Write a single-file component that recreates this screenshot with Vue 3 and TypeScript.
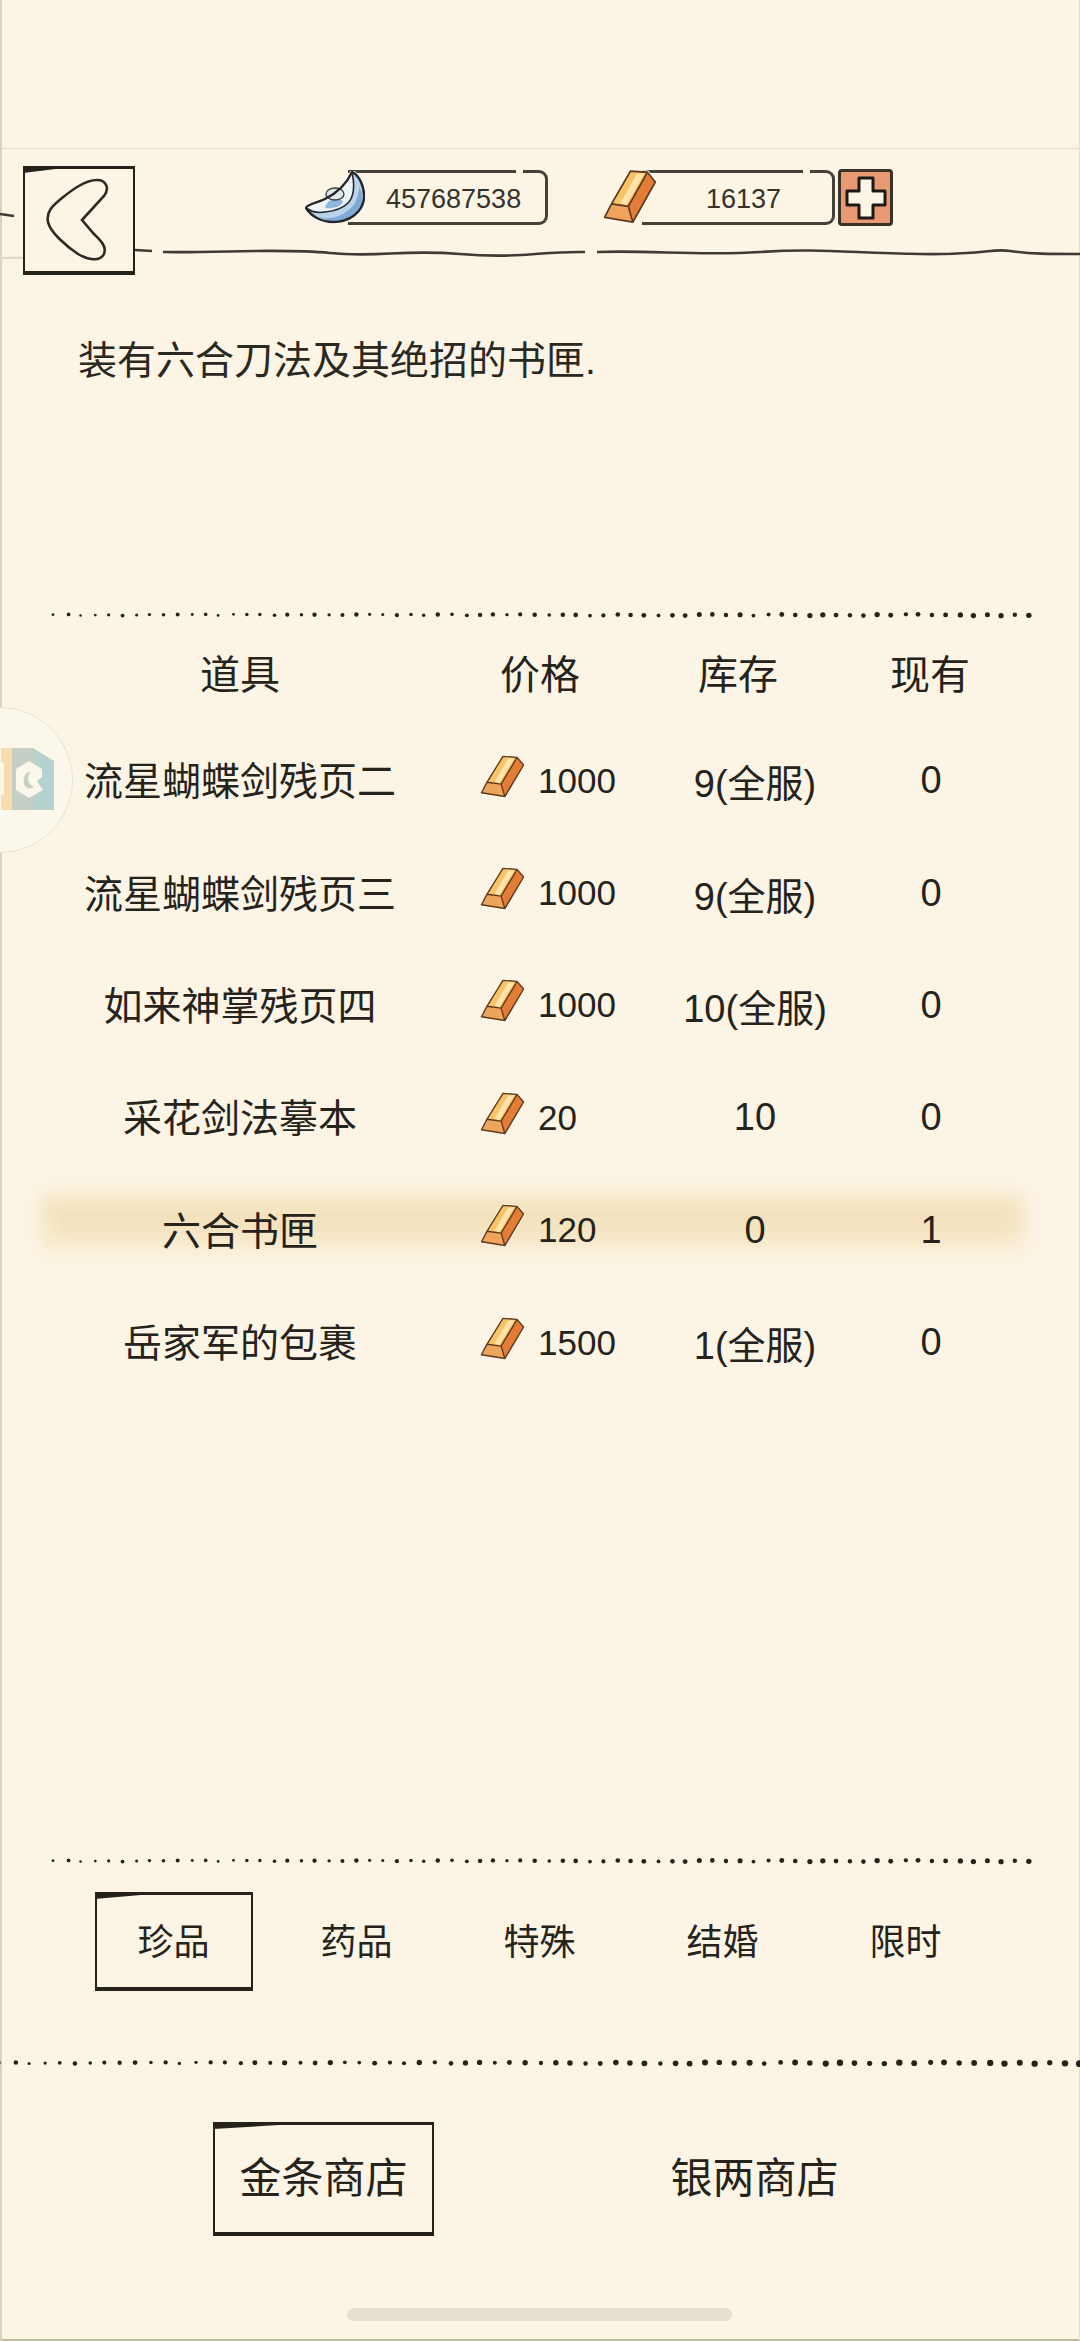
<script setup lang="ts">
interface ShopItem {
  name: string
  price: number
  stock: string
  owned: number
}

const items: ShopItem[] = [
  { name: '流星蝴蝶剑残页二', price: 1000, stock: '9(全服)', owned: 0 },
  { name: '流星蝴蝶剑残页三', price: 1000, stock: '9(全服)', owned: 0 },
  { name: '如来神掌残页四', price: 1000, stock: '10(全服)', owned: 0 },
  { name: '采花剑法摹本', price: 20, stock: '10', owned: 0 },
  { name: '六合书匣', price: 120, stock: '0', owned: 1 },
  { name: '岳家军的包裹', price: 1500, stock: '1(全服)', owned: 0 },
]

const tabs = ['珍品', '药品', '特殊', '结婚', '限时']
const selectedName = '六合书匣'

function noise(i: number) {
  const v = Math.sin(i * 12.9898) * 43758.5453
  return v - Math.floor(v)
}

// hand-drawn dotted rule, the dots get fatter to the right
function dots(width: number, pitch: number, scale: number) {
  const count = Math.round(width / pitch)
  const list = []
  for (let i = 0; i <= count; i++) {
    const t = i / count
    list.push({
      x: i * pitch + (noise(i) - 0.5) * 2,
      y: 6 + (noise(i + 50) - 0.5) * 1.4,
      r: (1.2 + t * 1 + noise(i + 100) * 0.7) * scale,
    })
  }
  return list
}

const innerDots = dots(975, 13.73, 1)
const fullDots = dots(1080, 15, 1.2)
</script>

<template>
  <div class="page">
    <svg class="defs" width="0" height="0">
      <symbol id="gold" viewBox="-1.5 -1.5 48 46" preserveAspectRatio="none">
        <path d="M6 28 23 1 38 2 45 10 25 43 0 39Z" fill="#fffaf0" stroke="#fffaf0" stroke-width="3" />
        <path d="M6 28 23 1 38 2 21 30Z" fill="#f9c468" />
        <path d="M14 27 29 3 35 3 19 29Z" fill="#fde3ae" />
        <path d="M38 2 45 10 25 43 21 30Z" fill="#e27c36" />
        <path d="M6 28 21 30 25 43 0 39Z" fill="#eea45a" />
        <path d="M6 28 23 1 38 2 45 10 25 43 0 39ZM6 28 21 30 38 2M21 30 25 43" fill="none" stroke="#5f3a1c" stroke-width="1.5" stroke-linejoin="round" />
      </symbol>
    </svg>

    <div class="status"></div>

    <header class="topbar">
      <svg class="sketch-line" width="1080" height="110" viewBox="0 149 1080 110">
        <path d="M0 214 14 216" />
        <path d="M135 250 152 251M163 252C220 253 280 248 330 253S400 249 460 254 540 251 585 252M597 252C650 250 700 256 760 252S850 253 920 254 990 248 1010 251 1050 254 1080 254" />
        <path class="faint" d="M0 258H23" />
      </svg>
      <button class="back sketch">
        <svg width="106" height="100" viewBox="26 170 106 100">
          <path d="M82 220 104 196C110 188 106 180 97 180 85 180 72 190 62 198 52 206 46 212 48 222 50 232 66 246 78 254 88 260 100 262 104 254 107 246 100 240 94 234Z" />
        </svg>
      </button>
      <div class="money silver-money">
        <svg class="coin silver" width="60" height="53" viewBox="0 0 60 53">
          <path d="M47 1C54 4 60 16 59 28 57 42 44 51 28 51 16 51 6 45 1 37 2 33 12 32 20 28 32 22 42 12 47 1Z" fill="#eef3f5" stroke="#fffaf0" stroke-width="4" />
          <path d="M1 37C8 42 14 42 20 41 30 40 38 37 43 32 49 26 50 14 47 2 54 6 60 16 59 28 57 42 44 51 28 51 16 51 6 45 1 37Z" fill="#b9d3ea" />
          <path d="M14 46C26 50 42 44 50 32 53 26 54 20 54 16 60 26 58 38 50 44 40 52 24 52 14 46Z" fill="#7fa9d6" />
          <path d="M20 37C22 31 24 29 28 29 33 28 38 28 38 31 35 36 28 38 20 37Z" fill="#8db7de" />
          <ellipse cx="30" cy="23" rx="9" ry="6" fill="#dfe9ee" stroke="#3a3f45" stroke-width="1.4" />
          <path d="M47 1C54 4 60 16 59 28 57 42 44 51 28 51 16 51 6 45 1 37 2 33 12 32 20 28 32 22 42 12 47 1Z" fill="none" stroke="#24262a" stroke-width="2.4" stroke-linejoin="round" />
          <path d="M1 37C8 42 14 42 20 41 30 40 38 37 43 32 49 26 50 14 47 2" fill="none" stroke="#24262a" stroke-width="1.6" />
        </svg>
        <span class="pill silver-pill">457687538</span>
      </div>
      <div class="money gold-money">
        <svg class="coin" width="54" height="56"><use href="#gold" /></svg>
        <span class="pill gold-pill">16137</span>
      </div>
      <button class="plus">
        <svg width="44" height="46" viewBox="0 0 44 46">
          <path d="M15 3H29V16H41V30H29V43H15V30H3V16H15Z" />
        </svg>
      </button>
    </header>

    <p class="desc">装有六合刀法及其绝招的书匣.</p>

    <svg class="dots inner" width="980" height="12">
      <circle v-for="(d, i) in innerDots" :key="i" :cx="d.x" :cy="d.y" :r="d.r" />
    </svg>

    <section class="table">
      <div class="thead">
        <span>道具</span>
        <span>价格</span>
        <span>库存</span>
        <span>现有</span>
      </div>
      <div
        v-for="item in items"
        :key="item.name"
        class="row"
        :class="{ selected: item.name === selectedName }"
      >
        <span class="name">{{ item.name }}</span>
        <span class="price">
          <svg width="45" height="44"><use href="#gold" /></svg>
          <span class="amount">{{ item.price }}</span>
        </span>
        <span class="num">{{ item.stock }}</span>
        <span class="num">{{ item.owned }}</span>
      </div>
    </section>

    <svg class="dots inner" width="980" height="12">
      <circle v-for="(d, i) in innerDots" :key="i" :cx="d.x" :cy="d.y" :r="d.r" />
    </svg>

    <nav class="tabs">
      <div v-for="(tab, i) in tabs" :key="tab" class="tab">
        <span :class="{ sketch: i === 0 }">{{ tab }}</span>
      </div>
    </nav>

    <svg class="dots full" width="1080" height="12">
      <circle v-for="(d, i) in fullDots" :key="i" :cx="d.x" :cy="d.y" :r="d.r" />
    </svg>

    <nav class="shops">
      <span class="shop sketch">金条商店</span>
      <span class="shop">银两商店</span>
    </nav>

    <div class="home-bar"></div>

    <div class="float-btn">
      <svg width="53" height="63" viewBox="0 0 53 63">
        <path d="M0 0H11V62H0Z" fill="#f9dcae" />
        <path d="M0 15H3V47H0Z" fill="#fbf7ea" />
        <path d="M11 0H32V62H11Z" fill="#c5cfc5" />
        <path d="M32 0 53 13V62H32Z" fill="#b5d2cf" />
        <path d="M28 13 41 21V29L36 33 42 42 28 50 15 42V21Z" fill="#fbf7ea" />
        <path d="M29 24C23 25 22 31 23 36 25 41 30 41 33 39 29 37 27 34 27 31 27 28 28 26 29 24Z" fill="#c5cfc5" />
      </svg>
    </div>
  </div>
</template>

<style scoped>
.page {
  position: relative;
  width: 1080px;
  height: 2341px;
  overflow: hidden;
  background: #fcf5e5;
  box-shadow: inset 2px 0 #dcd2b9, inset -1px 0 #e6dfcd, inset 0 -2px #bdbd9f;
  color: #26221c;
  font-family: "Liberation Sans", "Noto Sans CJK SC", sans-serif;
}
.defs {
  position: absolute;
}
.status {
  height: 148px;
  border-bottom: 1px solid #e2dbc9;
}
.topbar {
  position: relative;
  display: flex;
  align-items: flex-start;
  height: 187px;
  padding-left: 23px;
}
.sketch-line {
  position: absolute;
  left: 0;
  top: 0;
  fill: none;
  stroke: #3d3b33;
  stroke-width: 2.6;
}
.sketch-line .faint {
  stroke: #e0d9c6;
}
.sketch {
  position: relative;
  box-sizing: border-box;
  border: solid #25221c;
  border-width: 3px 2px 4px;
}
.sketch::before {
  content: "";
  position: absolute;
  left: -2px;
  top: -3px;
  width: 32%;
  height: 7px;
  background: #25221c;
  clip-path: polygon(0 0, 100% 0, 100% 40%, 0 100%);
}
.back {
  position: relative;
  width: 112px;
  height: 109px;
  margin-top: 17px;
  padding: 0;
  background: #fcf5e5;
  display: flex;
  align-items: center;
  justify-content: center;
}
.back path {
  fill: none;
  stroke: #2c2a24;
  stroke-width: 2.6;
}
.money {
  position: relative;
  display: flex;
  align-items: flex-start;
}
.silver-money {
  margin-left: 170px;
  margin-top: 22px;
}
.gold-money {
  margin-left: 55px;
  margin-top: 19px;
}
.coin {
  position: relative;
  z-index: 1;
  flex: none;
}
.pill {
  position: relative;
  box-sizing: border-box;
  height: 55px;
  line-height: 52px;
  border: 3px solid #45423a;
  border-left: none;
  border-radius: 0 9px 9px 0;
  font-size: 27px;
  color: #35322b;
}
.pill::after {
  content: "";
  position: absolute;
  right: 22px;
  top: -3px;
  width: 7px;
  height: 3px;
  background: #fcf5e5;
}
.silver-pill {
  width: 200px;
  margin-left: -17px;
  margin-top: -1px;
  padding-left: 38px;
}
.gold-pill {
  width: 193px;
  margin-left: -15px;
  margin-top: 2px;
  padding-left: 64px;
}
.plus {
  box-sizing: border-box;
  width: 55px;
  height: 57px;
  margin: 20px 0 0 3px;
  padding: 0;
  display: flex;
  align-items: center;
  justify-content: center;
  background: #e89872;
  border: 3px solid #3a3127;
  border-radius: 4px;
}
.plus path {
  fill: #fcf5e5;
  stroke: #1d1a15;
  stroke-width: 3;
  stroke-linejoin: round;
}
.desc {
  box-sizing: border-box;
  height: 273px;
  margin: 0;
  padding-top: 1px;
  padding-left: 78px;
  font-size: 39px;
  line-height: 48px;
  color: #2b2822;
}
.dots {
  display: block;
  overflow: visible;
  fill: #26231d;
}
.inner {
  margin-left: 54px;
}
.table {
  height: 1234px;
}
.thead {
  display: grid;
  grid-template-columns: 480px 120px 276px 108px;
  height: 92px;
  padding-top: 5px;
  padding-bottom: 3px;
  align-items: center;
  text-align: center;
  font-size: 40px;
}
.row {
  position: relative;
  display: grid;
  grid-template-columns: 480px 170px 210px 142px;
  height: 112.4px;
  align-items: center;
  text-align: center;
  font-size: 38px;
}
.row > * {
  position: relative;
}
.row.selected::before {
  content: "";
  position: absolute;
  left: 42px;
  right: 56px;
  top: 24px;
  height: 56px;
  background: linear-gradient(#f4e2bd 60%, #f8ecd2);
  filter: blur(10px);
}
.name {
  font-size: 39px;
  padding-top: 2px;
}
.price {
  display: flex;
  align-items: center;
  gap: 13px;
  font-size: 35px;
}
.price svg {
  flex: none;
  margin-top: -3px;
}
.amount {
  padding-top: 7px;
}
.num {
  padding-top: 7px;
}
.tabs {
  display: flex;
  height: 190px;
  box-sizing: border-box;
  padding: 25px 0 0 82px;
}
.tab {
  width: 183px;
  display: flex;
  justify-content: center;
}
.tab span {
  box-sizing: border-box;
  width: 158px;
  height: 99px;
  line-height: 96px;
  text-align: center;
  font-size: 36px;
}
.tab span:not(.sketch) {
  padding-top: 3px;
}
.shops {
  display: flex;
  gap: 210px;
  padding: 53px 0 0 213px;
}
.shop {
  box-sizing: border-box;
  width: 221px;
  height: 114px;
  line-height: 108px;
  text-align: center;
  font-size: 42px;
}
.shop:not(.sketch) {
  padding-top: 3px;
}
.home-bar {
  width: 385px;
  height: 13px;
  margin: 72px 0 0 347px;
  border-radius: 7px;
  background: #e6e0d3;
}
.float-btn {
  position: absolute;
  left: -73px;
  top: 707px;
  box-sizing: border-box;
  width: 146px;
  height: 146px;
  padding: 40px 0 0 73px;
  border: 1px solid #e1e4d8;
  border-radius: 50%;
  background: #fbf7ea;
}
</style>

<style>
html,
body {
  margin: 0;
  background: #fcf5e5;
}
</style>
